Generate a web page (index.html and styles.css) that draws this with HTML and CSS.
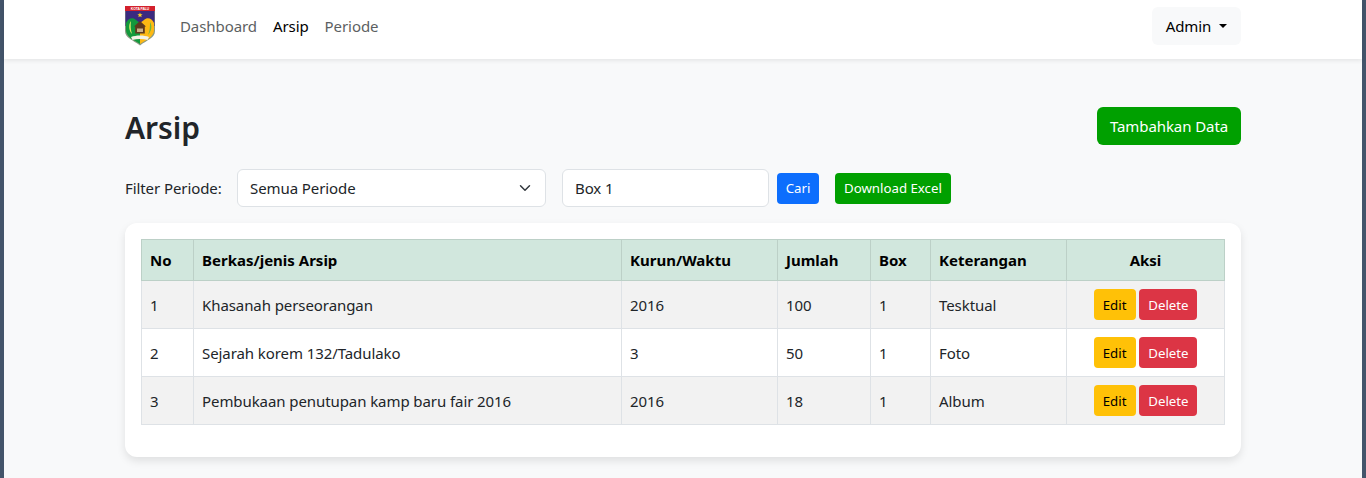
FILE: index.html
```html
<!DOCTYPE html>
<html lang="id">
<head>
    <meta charset="UTF-8">
    <meta name="viewport" content="width=device-width, initial-scale=1.0">
    <title>Arsip</title>
    <link rel="stylesheet" href="styles.css">
</head>
<body>
    <div class="page">
        <nav class="navbar">
            <div class="container nav-inner">
                <a class="brand" href="#">
                    <svg class="logo" width="30" height="40" viewBox="0 0 30 40">
                        <path d="M0 5 V25 C0 32 8 34 15 39.5 C22 34 30 32 30 25 V5 Z" fill="#8c9a82"/>
                        <rect x="0" y="0" width="30" height="5" fill="#d3202c"/>
                        <text class="logo-text" x="15" y="3.8" text-anchor="middle">KOTA PALU</text>
                        <rect x="0.5" y="5" width="29" height="15" fill="#3b2a80"/>
                        <path d="M15 6.5 L15.7 8.3 L17.6 8.3 L16.1 9.5 L16.7 11.3 L15 10.2 L13.3 11.3 L13.9 9.5 L12.4 8.3 L14.3 8.3 Z" fill="#ffd21f"/>
                        <path d="M1 17 C3 12 8 11 11 14 L15 17 V38 C9 34 1 31 1 24 Z" fill="#12993c"/>
                        <path d="M29 17 C27 12 22 11 19 14 L15 17 V38 C21 34 29 31 29 24 Z" fill="#fdb913"/>
                        <path d="M6 15 C3 19 4 25 7 28 C5.5 24 5.5 19 6 15 Z" fill="#d8e86a"/>
                        <path d="M25 16 C27.5 20 26.5 25 23 29 C25 25 25 20 25 16 Z" fill="#6fb53c"/>
                        <path d="M15 15 L21 20.5 H19.8 V27.5 H10.2 V20.5 H9 Z" fill="#5e3a1e"/>
                        <rect x="12" y="22.5" width="6" height="3.5" fill="#c9b18a"/>
                        <path d="M6 31 C11 29 19 29 24 31 L22.5 34 C18 32.5 12 32.5 7.5 34 Z" fill="#f2f2e6"/>
                    </svg>
                </a>
                <div class="nav-links">
                    <a class="nav-link" href="#">Dashboard</a>
                    <a class="nav-link active" href="#">Arsip</a>
                    <a class="nav-link" href="#">Periode</a>
                </div>
                <button class="admin-btn">Admin<span class="caret"></span></button>
            </div>
        </nav>

        <main class="container content">
            <div class="title-row">
                <h1>Arsip</h1>
                <button class="btn btn-green btn-add">Tambahkan Data</button>
            </div>

            <form class="filter-row">
                <label class="filter-label">Filter Periode:</label>
                <select class="field field-select">
                    <option>Semua Periode</option>
                </select>
                <input class="field field-search" type="text" value="Box 1">
                <button class="btn btn-sm btn-blue" type="button">Cari</button>
                <button class="btn btn-sm btn-green btn-excel" type="button">Download Excel</button>
            </form>

            <div class="card">
                <table class="arsip-table">
                    <colgroup>
                        <col class="col-no">
                        <col class="col-berkas">
                        <col class="col-kurun">
                        <col class="col-jumlah">
                        <col class="col-box">
                        <col class="col-ket">
                        <col class="col-aksi">
                    </colgroup>
                    <thead>
                        <tr>
                            <th>No</th>
                            <th>Berkas/jenis Arsip</th>
                            <th>Kurun/Waktu</th>
                            <th>Jumlah</th>
                            <th>Box</th>
                            <th>Keterangan</th>
                            <th class="center">Aksi</th>
                        </tr>
                    </thead>
                    <tbody>
                        <tr>
                            <td>1</td>
                            <td>Khasanah perseorangan</td>
                            <td>2016</td>
                            <td>100</td>
                            <td>1</td>
                            <td>Tesktual</td>
                            <td class="center">
                                <button class="btn btn-sm btn-yellow">Edit</button>
                                <button class="btn btn-sm btn-red">Delete</button>
                            </td>
                        </tr>
                        <tr>
                            <td>2</td>
                            <td>Sejarah korem 132/Tadulako</td>
                            <td>3</td>
                            <td>50</td>
                            <td>1</td>
                            <td>Foto</td>
                            <td class="center">
                                <button class="btn btn-sm btn-yellow">Edit</button>
                                <button class="btn btn-sm btn-red">Delete</button>
                            </td>
                        </tr>
                        <tr>
                            <td>3</td>
                            <td>Pembukaan penutupan kamp baru fair 2016</td>
                            <td>2016</td>
                            <td>18</td>
                            <td>1</td>
                            <td>Album</td>
                            <td class="center">
                                <button class="btn btn-sm btn-yellow">Edit</button>
                                <button class="btn btn-sm btn-red">Delete</button>
                            </td>
                        </tr>
                    </tbody>
                </table>
            </div>
        </main>
    </div>
</body>
</html>
```

FILE: styles.css
```css
* {
    box-sizing: border-box;
}
html, body {
    height: 100%;
}
body {
    margin: 0;
    padding: 0 4px;
    overflow: hidden;
    background-color: #43546a; /* dark window edge */
    font-family: 'Noto Sans', sans-serif;
    font-size: 15px;
    line-height: 24px;
    letter-spacing: -0.08px;
    color: #212529;
}
.page {
    height: 100%;
    background-color: #f8f9fa;
}
.container {
    width: 1140px;
    margin: 0 auto;
    padding: 0 12px;
}

/* navbar */
.navbar {
    height: 59px;
    background-color: #fff;
    box-shadow: 0 2px 4px rgba(0, 0, 0, 0.075);
}
.nav-inner {
    display: flex;
    align-items: flex-start;
}
.brand {
    display: block;
    margin-top: 6px;
    margin-right: 17px;
    height: 40px;
}
.logo {
    display: block;
}
.logo-text {
    font-family: 'Liberation Sans', sans-serif;
    font-size: 3.4px;
    font-weight: bold;
    fill: #fff;
}
.nav-links {
    display: flex;
    margin-top: 7px;
}
.nav-link {
    padding: 7px 8px;
    color: #5c5f62;
    text-decoration: none;
}
.nav-link.active {
    color: #000;
}
.admin-btn {
    display: flex;
    align-items: center;
    justify-content: center;
    width: 89px;
    height: 38px;
    margin-top: 7px;
    margin-left: auto;
    border: none;
    border-radius: 6px;
    background-color: #f8f9fa;
    color: #000;
    font: inherit;
    letter-spacing: inherit;
}
.caret {
    margin-left: 8px;
    border-top: 4.8px solid #000;
    border-left: 4.8px solid transparent;
    border-right: 4.8px solid transparent;
}

/* content */
.content {
    padding-top: 48px;
}
.title-row {
    display: flex;
    justify-content: space-between;
    align-items: flex-start;
    height: 38px;
    margin-bottom: 24px;
}
h1 {
    margin: 0;
    font-size: 30px;
    line-height: 42px;
    font-weight: 600;
}
.btn {
    height: 38px;
    padding: 0 13px;
    border: none;
    border-radius: 6px;
    font: inherit;
    letter-spacing: inherit;
    color: #fff;
}
.btn-add {
    width: 144px;
    padding: 0;
}
.btn-sm {
    height: 31px;
    padding: 0 9px;
    border-radius: 4px;
    font-size: 13.25px;
    letter-spacing: 0;
}
.btn-green {
    background-color: #00a000;
}
.btn-blue {
    width: 42px;
    padding: 0;
    background-color: #0d6efd;
}
.btn-yellow {
    width: 42px;
    padding: 0;
    background-color: #ffc107;
    color: #000;
}
.btn-red {
    width: 58px;
    padding: 0;
    background-color: #dc3545;
}

/* filter */
.filter-row {
    display: flex;
    align-items: center;
    gap: 8px;
    margin-bottom: 16px;
}
.filter-label {
    width: 104px;
}
.field {
    height: 38px;
    padding: 0 12px;
    border: 1px solid #dee2e6;
    border-radius: 6px;
    background-color: #fff;
    color: #212529;
    font: inherit;
    letter-spacing: inherit;
}
.field-select {
    width: 309px;
    margin-right: 8px;
    appearance: none;
    background-image: url("data:image/svg+xml,%3csvg xmlns='http://www.w3.org/2000/svg' viewBox='0 0 16 16'%3e%3cpath fill='none' stroke='%23343a40' stroke-linecap='round' stroke-linejoin='round' stroke-width='2' d='m2 5 6 6 6-6'/%3e%3c/svg%3e");
    background-repeat: no-repeat;
    background-position: right 12px center;
    background-size: 16px 12px;
}
.field-search {
    width: 207px;
}
.btn-excel {
    margin-left: 8px;
}

/* table card */
.card {
    padding: 16px 16px 32px;
    border-radius: 12px;
    background-color: #fff;
    box-shadow: 0 4px 8px rgba(0, 0, 0, 0.1);
}
.arsip-table {
    width: 1083px;
    table-layout: fixed;
    border-collapse: collapse;
}
.col-no { width: 52px; }
.col-berkas { width: 428px; }
.col-kurun { width: 156px; }
.col-jumlah { width: 93px; }
.col-box { width: 60px; }
.col-ket { width: 136px; }
.col-aksi { width: 158px; }
.arsip-table th,
.arsip-table td {
    padding: 8px;
    border: 1px solid #dee2e6;
    text-align: left;
    vertical-align: middle;
}
.arsip-table th {
    background-color: #d1e7dd;
    border-color: #bcd0c7;
    color: #000;
    font-weight: 700;
    letter-spacing: 0;
}
.arsip-table tbody tr:nth-child(odd) td {
    background-color: #f2f2f2;
}
.arsip-table .center {
    text-align: center;
}
```
